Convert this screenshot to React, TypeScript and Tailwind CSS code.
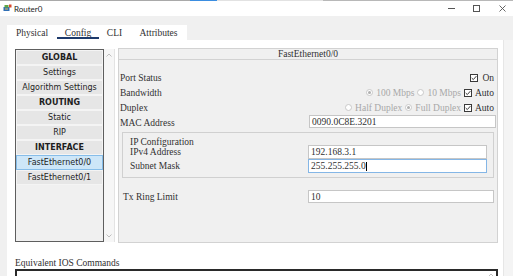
import React from 'react';

const serif = "font-['Liberation_Serif','Noto_Sans_CJK_SC',serif] text-[9.5px] leading-[10px] text-[#303030]";

type Item = { label: string; head?: boolean; active?: boolean };

const items: Item[] = [
  { label: 'GLOBAL', head: true },
  { label: 'Settings' },
  { label: 'Algorithm Settings' },
  { label: 'ROUTING', head: true },
  { label: 'Static' },
  { label: 'RIP' },
  { label: 'INTERFACE', head: true },
  { label: 'FastEthernet0/0', active: true },
  { label: 'FastEthernet0/1' },
];

const Check = () => (
  <span className="w-[8px] h-[8px] border border-[#3a3a3a] bg-white flex items-center justify-center shrink-0">
    <svg width="6" height="6" viewBox="0 0 6 6">
      <path d="M0.7 3 L2.3 4.6 L5.4 1.1" fill="none" stroke="#222" strokeWidth="0.9" />
    </svg>
  </span>
);

const Radio: React.FC<{ on?: boolean }> = ({ on }) => (
  <span className="w-[7px] h-[7px] rounded-full border border-[#c9c9c9] bg-white flex items-center justify-center shrink-0">
    {on && <span className="w-[3px] h-[3px] rounded-full bg-[#b0b0b0]" />}
  </span>
);

const Chevron: React.FC<{ up?: boolean }> = ({ up }) => (
  <svg width="6" height="4" viewBox="0 0 6 4">
    <path d={up ? 'M0.5 3.5 L3 1 L5.5 3.5' : 'M0.5 0.5 L3 3 L5.5 0.5'} fill="none" stroke="#b0b0b0" strokeWidth="0.8" />
  </svg>
);

const RouterIcon = () => (
  <svg width="9" height="8" viewBox="0 0 9 8">
    <rect x="0.5" y="3" width="6" height="4" fill="#2f6fb5" />
    <rect x="1.5" y="1" width="4" height="2.5" fill="#5fa743" />
    <rect x="6" y="0.5" width="2.5" height="3" fill="#d9472b" />
    <rect x="2" y="4.5" width="3" height="1" fill="#e8c24a" />
  </svg>
);

const Field: React.FC<{ value: string; focused?: boolean; className?: string }> = ({ value, focused, className }) => (
  <div className={`bg-white border ${focused ? 'border-[#84b6e6]' : 'border-[#c6c6c6]'} flex items-center pl-[2px] ${className ?? ''}`}>
    <span className={serif}>{value}</span>
    {focused && <span className="w-px h-[9px] bg-black" />}
  </div>
);

const TitleBar = () => (
  <>
    <div className="h-px flex shrink-0">
      <div className="w-[190px] bg-[#a9a9a9]" />
      <div className="w-[27px] bg-[#3b8de0]" />
      <div className="w-[106px] bg-[#e2e2e2]" />
      <div className="flex-1 bg-[#b8b8b8]" />
    </div>
    <div className="h-[15px] bg-white flex items-center shrink-0">
      <div className="ml-[3px] mb-[1px]"><RouterIcon /></div>
      <span className="ml-[2px] font-['Lato',sans-serif] text-[8px] leading-[10px] text-[#222]">Router0</span>
      <div className="ml-auto flex items-center mr-[7px]">
        <div className="w-[7px] h-px bg-[#555]" />
        <div className="ml-[18px] w-[7px] h-[7px] border border-[#555]" />
        <svg className="ml-[19px]" width="7" height="7" viewBox="0 0 7 7">
          <path d="M0.5 0.5 L6.5 6.5 M6.5 0.5 L0.5 6.5" stroke="#555" strokeWidth="0.9" />
        </svg>
      </div>
    </div>
  </>
);

const Tabs = () => (
  <div className="h-[24px] flex items-end pl-[7px] shrink-0">
    <div className="h-[15px] w-[180px] bg-white flex">
      <div className="w-[50px] flex justify-center pt-[3px]"><span className={serif}>Physical</span></div>
      <div className="w-[42px] flex flex-col items-center pt-[3px]">
        <span className={serif}>Config</span>
        <div className="w-full h-[2px] bg-[#1d3a6b] mt-[-1px]" />
      </div>
      <div className="w-[31px] flex justify-center pt-[3px]"><span className={serif}>CLI</span></div>
      <div className="w-[57px] flex justify-center pt-[3px]"><span className={serif}>Attributes</span></div>
    </div>
  </div>
);

const SideList = () => (
  <div className="flex mt-[1px]">
    <div className="w-[89px] h-[193px] border border-[#5e5e5e] bg-[#f0f0f0] flex flex-col font-['DejaVu_Sans',sans-serif] text-[8px] text-[#1e1e1e]">
      {items.map(it => (
        <div
          key={it.label}
          className={`h-[15px] shrink-0 flex items-center justify-center border ${it.active ? 'bg-[#cde6f8] border-[#86bde9]' : 'bg-[#e6e6e6] border-[#f4f4f4]'} ${it.head ? 'font-bold' : ''}`}
        >
          {it.label}
        </div>
      ))}
    </div>
    <div className="w-[11px] h-[193px] bg-[#f6f6f6] border-r border-[#e3e3e3] flex flex-col items-center justify-between py-[4px]">
      <Chevron up />
      <Chevron />
    </div>
  </div>
);

const ConfigPanel = () => (
  <div className={`ml-[3px] w-[380px] h-[195px] bg-[#f0f0f0] border border-[#d2d2d2] flex flex-col ${serif}`}>
    <div className="h-[11px] border-b border-[#d2d2d2] flex items-center justify-center">FastEthernet0/0</div>

    <div className="mt-[11px] h-[14px] flex items-center pl-[1px] pr-[3px]">
      <span>Port Status</span>
      <div className="ml-auto flex items-center gap-[4px]">
        <Check />
        <span>On</span>
      </div>
    </div>
    <div className="h-[15px] flex items-center pl-[1px] pr-[3px]">
      <span>Bandwidth</span>
      <div className="ml-auto flex items-center gap-[3px]">
        <Radio on />
        <span className="text-[#a8a8a8]">100 Mbps</span>
        <Radio />
        <span className="text-[#a8a8a8]">10 Mbps</span>
        <Check />
        <span>Auto</span>
      </div>
    </div>
    <div className="h-[15px] flex items-center pl-[1px] pr-[3px]">
      <span>Duplex</span>
      <div className="ml-auto flex items-center gap-[3px]">
        <Radio />
        <span className="text-[#a8a8a8]">Half Duplex</span>
        <Radio on />
        <span className="text-[#a8a8a8]">Full Duplex</span>
        <Check />
        <span>Auto</span>
      </div>
    </div>
    <div className="h-[15px] flex items-start pl-[1px] pr-[1px]">
      <span className="w-[189px] h-[15px] flex items-center">MAC Address</span>
      <Field value="0090.0C8E.3201" className="flex-1 h-[13px]" />
    </div>

    <div className="mt-[2px] mx-[3px] h-[46px] border border-[#d0d0d0] flex flex-col pl-[7px] pr-[6px] pt-[4px]">
      <span className="leading-[10px]">IP Configuration</span>
      <div className="-mt-[2px] h-[14px] flex">
        <span className="w-[178px] flex items-center">IPv4 Address</span>
        <Field value="192.168.3.1" className="flex-1 h-[14px]" />
      </div>
      <div className="h-[14px] flex">
        <span className="w-[178px] flex items-center">Subnet Mask</span>
        <Field value="255.255.255.0" focused className="flex-1 h-[14px]" />
      </div>
    </div>

    <div className="mt-[12px] h-[13px] flex pl-[4px] pr-[3px]">
      <span className="w-[185px] flex items-center">Tx Ring Limit</span>
      <Field value="10" className="flex-1 h-[13px]" />
    </div>
  </div>
);

export default function App() {
  return (
    <div className="w-[513px] h-[276px] bg-[#f0f0f0] flex flex-col overflow-hidden">
      <TitleBar />
      <Tabs />
      <div className="flex-1 flex min-h-0">
        <div className="w-[7px]" />
        <div className="w-[496px] bg-white flex flex-col pl-[8px] pt-[8px]">
          <div className="flex items-start">
            <SideList />
            <ConfigPanel />
          </div>
          <span className={`mt-[15px] ${serif}`}>Equivalent IOS Commands</span>
          <div className="mt-px w-[483px] h-[20px] border-2 border-[#2a2a2a] bg-white flex justify-end pr-[2px] pt-[2px]">
            <Chevron up />
          </div>
        </div>
        <div className="flex-1 bg-[#f4f4f4] border-l border-[#e6e6e6]" />
      </div>
    </div>
  );
}
